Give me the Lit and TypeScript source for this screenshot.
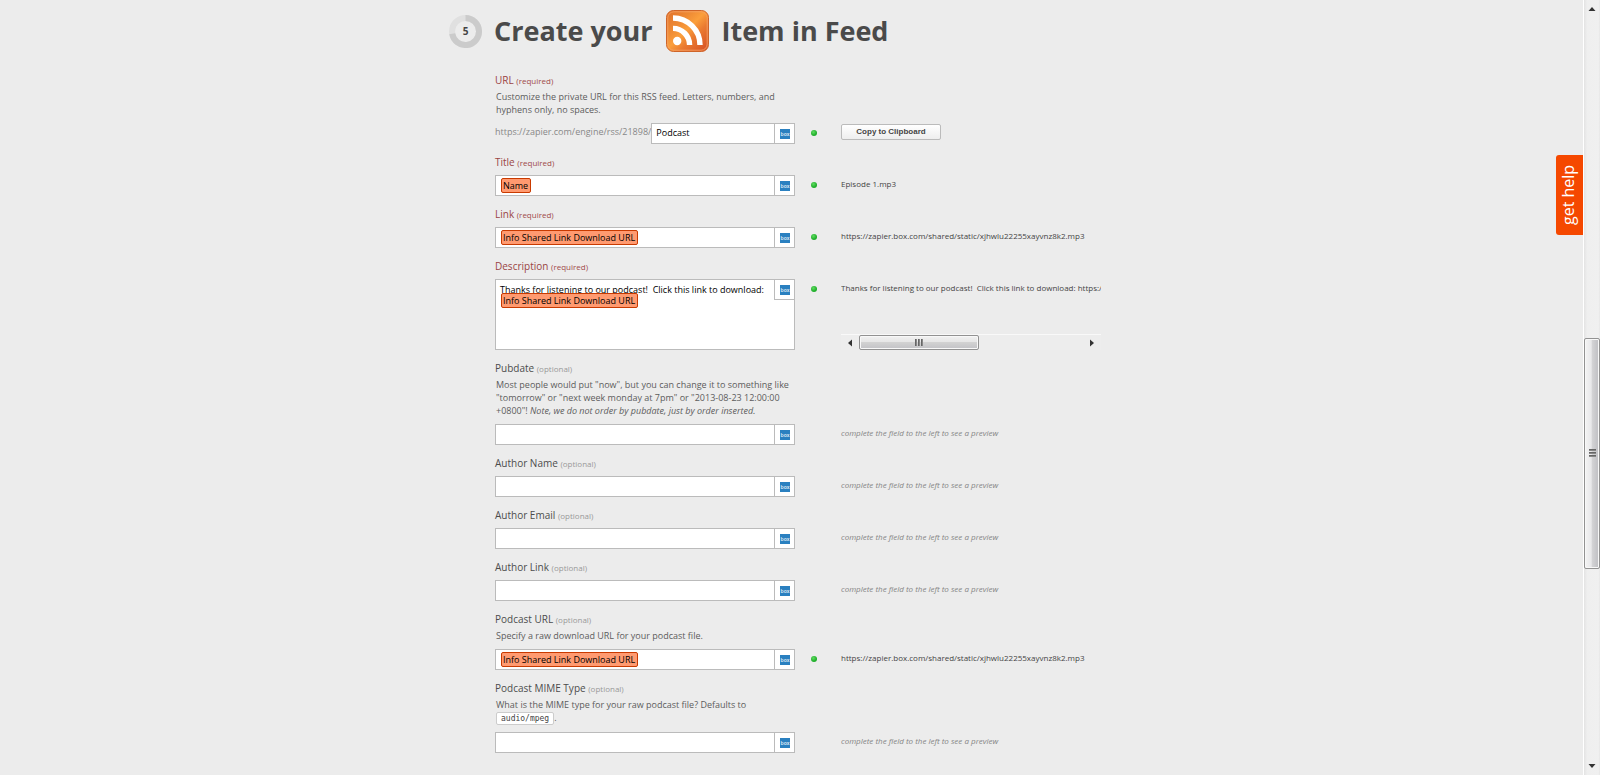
import { LitElement, html, css, svg, nothing } from "lit";
import { customElement, property } from "lit/decorators.js";

interface Field {
  id: string;
  label: string;
  required?: boolean;
  help?: unknown;
  prefix?: string;
  text?: string;
  chip?: string;
  multiline?: boolean;
  copy?: boolean;
  preview?: string;
}

const DOWNLOAD_CHIP = "Info Shared Link Download URL";
const FILE_URL = "https://zapier.box.com/shared/static/xjhwlu22255xayvnz8k2.mp3";

const FIELDS: Field[] = [
  {
    id: "url",
    label: "URL",
    required: true,
    help: "Customize the private URL for this RSS feed. Letters, numbers, and hyphens only, no spaces.",
    prefix: "https://zapier.com/engine/rss/21898/",
    text: "Podcast",
    copy: true,
  },
  { id: "title", label: "Title", required: true, chip: "Name", preview: "Episode 1.mp3" },
  { id: "link", label: "Link", required: true, chip: DOWNLOAD_CHIP, preview: FILE_URL },
  {
    id: "description",
    label: "Description",
    required: true,
    text: "Thanks for listening to our podcast!  Click this link to download:",
    chip: DOWNLOAD_CHIP,
    multiline: true,
    preview: `Thanks for listening to our podcast!  Click this link to download: ${FILE_URL}`,
  },
  {
    id: "pubdate",
    label: "Pubdate",
    help: html`Most people would put "now", but you can change it to something like "tomorrow" or "next week monday at 7pm" or "2013-08-23 12:00:00 +0800"! <em>Note, we do not order by pubdate, just by order inserted.</em>`,
  },
  { id: "author-name", label: "Author Name" },
  { id: "author-email", label: "Author Email" },
  { id: "author-link", label: "Author Link" },
  {
    id: "podcast-url",
    label: "Podcast URL",
    help: "Specify a raw download URL for your podcast file.",
    chip: DOWNLOAD_CHIP,
    preview: FILE_URL,
  },
  {
    id: "mime",
    label: "Podcast MIME Type",
    help: html`What is the MIME type for your raw podcast file? Defaults to <code>audio/mpeg</code>.`,
  },
];

const arrow = (points: string) => html`
  <svg class="arrow" viewBox="0 0 8 8" width="8" height="8" aria-hidden="true">
    ${svg`<path d=${points} fill="#333"></path>`}
  </svg>
`;

@customElement("scroll-track")
export class ScrollTrack extends LitElement {
  @property({ type: Boolean, reflect: true }) vertical = false;
  @property({ type: Number }) before = 0;
  @property({ type: Number }) size = 1;
  @property({ type: Number }) after = 1;

  static styles = css`
    :host {
      display: flex;
      align-items: stretch;
      height: 16px;
      background: #ededed;
      border-top: 1px solid #f9f9f9;
      box-sizing: border-box;
    }
    :host([vertical]) {
      flex-direction: column;
      width: 17px;
      height: 100%;
      background: linear-gradient(90deg, #e3e3e3, #efefef 20%, #f0f0f0 90%, #e6e6e6);
      border-top: 0;
      border-left: 1px solid #fff;
    }
    .end {
      flex: none;
      width: 18px;
      display: grid;
      place-items: center;
    }
    :host([vertical]) .end {
      width: auto;
      height: 17px;
    }
    .arrow {
      display: block;
    }
    .space,
    .thumb {
      flex-basis: 0;
    }
    .thumb {
      display: flex;
      gap: 1px;
      align-items: center;
      justify-content: center;
      box-sizing: border-box;
      border: 1px solid #929292;
      border-radius: 2px;
      box-shadow: inset 0 0 0 1px #f8f8f8;
      background: linear-gradient(#f2f2f2, #e6e6e6 45%, #d2d2d2 50%, #c2c2c6);
    }
    :host([vertical]) .thumb {
      flex-direction: column;
      background: linear-gradient(90deg, #f4f4f4, #e8e8ea 45%, #d4d4d6 50%, #bebec2);
    }
    .grip {
      width: 2px;
      height: 7px;
      background: linear-gradient(90deg, #555, #999);
    }
    :host([vertical]) .grip {
      width: 7px;
      height: 2px;
      background: linear-gradient(#555, #999);
    }
  `;

  render() {
    return html`
      <div class="end">${arrow(this.vertical ? "M0.5 6 L4 2 L7.5 6Z" : "M6 0.5 L2 4 L6 7.5Z")}</div>
      <div class="space" style="flex-grow:${this.before}"></div>
      <div class="thumb" style="flex-grow:${this.size}">
        <span class="grip"></span><span class="grip"></span><span class="grip"></span>
      </div>
      <div class="space" style="flex-grow:${this.after}"></div>
      <div class="end">${arrow(this.vertical ? "M0.5 2 L4 6 L7.5 2Z" : "M2 0.5 L6 4 L2 7.5Z")}</div>
    `;
  }
}

@customElement("feed-field")
export class FeedField extends LitElement {
  @property({ attribute: false }) field!: Field;

  static styles = css`
    :host {
      display: block;
      font-family: "Open Sans", sans-serif;
      font-size: 9px;
      color: #555;
    }
    .label {
      display: block;
      font-size: 10px;
      font-weight: 500;
      line-height: 16px;
      margin-bottom: 5px;
      color: #4c4c4c;
    }
    .label.helped {
      margin-bottom: 2px;
    }
    .label.required {
      color: #9a4444;
    }
    .note {
      font-size: 8px;
      font-weight: 400;
      line-height: 12px;
      color: #999;
    }
    .required .note {
      color: #a04a4a;
    }
    .help {
      width: 300px;
      box-sizing: border-box;
      margin: 0 0 7px;
      padding: 0 1px;
      line-height: 13px;
      color: #5c5c5c;
    }
    code {
      display: inline-block;
      font: 8px/11px "DejaVu Sans Mono", monospace;
      padding: 0 4px;
      color: #444;
      background: #fff;
      border: 1px solid #ccc;
      border-radius: 2px;
    }
    .line {
      display: grid;
      grid-template-columns: 300px 14px 32px 260px;
    }
    .control {
      display: flex;
    }
    .prefix {
      line-height: 18px;
      color: #888;
      white-space: nowrap;
    }
    .box {
      flex: 1;
      min-width: 0;
      display: flex;
      align-items: flex-start;
      position: relative;
      box-sizing: border-box;
      height: 21px;
      border: 1px solid #bbb;
      background: #fff;
    }
    .box.multiline {
      height: 71px;
    }
    input,
    textarea {
      flex: 1;
      min-width: 0;
      box-sizing: border-box;
      height: 100%;
      margin: 0;
      padding: 0 4px 2px;
      border: 0;
      outline: 0;
      background: none;
      resize: none;
      overflow: hidden;
      font: 9px/13px "Open Sans", sans-serif;
      color: #000;
    }
    textarea {
      padding: 3px 4px;
      white-space: pre-wrap;
    }
    .chip {
      flex: none;
      box-sizing: border-box;
      height: 15px;
      margin: 2px 0 0 5px;
      padding: 0 2px 0 1px;
      line-height: 13px;
      color: #000;
      background: #ff9a70;
      border: 1px solid #c93a00;
      border-radius: 2px;
    }
    .multiline .chip {
      position: absolute;
      top: 13px;
      left: 5px;
      margin: 0;
    }
    .picker {
      flex: none;
      display: grid;
      place-items: center;
      box-sizing: border-box;
      width: 20px;
      height: 19px;
      margin: 0;
      padding: 0;
      border: 0;
      border-left: 1px solid #bbb;
      background: #fff;
    }
    .multiline .picker {
      height: 20px;
      border-bottom: 1px solid #bbb;
    }
    .dot {
      grid-column: 3;
      width: 6px;
      height: 6px;
      margin: 7px 0 0 2px;
      border-radius: 50%;
      background: radial-gradient(circle at 40% 35%, #5fdc60, #1fae2b 60%);
    }
    .preview {
      grid-column: 4;
      display: flex;
      flex-direction: column;
      justify-content: space-between;
      min-width: 0;
      font-size: 8px;
      line-height: 18px;
      color: #444;
    }
    .text {
      white-space: pre;
      overflow: hidden;
    }
    .empty {
      font-style: italic;
      color: #858585;
    }
    .copy {
      width: 100px;
      height: 16px;
      margin-top: 1px;
      padding: 0;
      font: 700 8px/12px "Liberation Sans", Arial, sans-serif;
      color: #444;
      border: 1px solid #bbb;
      border-radius: 2px;
      background: linear-gradient(#fff, #eee);
    }
  `;

  private control(f: Field) {
    if (f.multiline) {
      return html`<textarea id=${f.id} .value=${f.text ?? ""}></textarea>`;
    }
    return html`<input id=${f.id} type="text" .value=${f.text ?? ""} />`;
  }

  private preview(f: Field) {
    if (f.copy) return html`<button class="copy" type="button">Copy to Clipboard</button>`;
    if (!f.preview) return html`<span class="text empty">complete the field to the left to see a preview</span>`;
    return html`
      <span class="text">${f.preview}</span>
      ${f.multiline ? html`<scroll-track .before=${0} .size=${119} .after=${105}></scroll-track>` : nothing}
    `;
  }

  render() {
    const f = this.field;
    return html`
      <label class="label ${f.required ? "required" : ""} ${f.help ? "helped" : ""}" for=${f.id}
        >${f.label} <span class="note">(${f.required ? "required" : "optional"})</span></label
      >
      ${f.help ? html`<p class="help">${f.help}</p>` : nothing}
      <div class="line">
        <div class="control">
          ${f.prefix ? html`<span class="prefix">${f.prefix}</span>` : nothing}
          <div class="box ${f.multiline ? "multiline" : ""}">
            ${f.chip ? html`<span class="chip">${f.chip}</span>` : nothing} ${this.control(f)}
            <button class="picker" type="button" aria-label="Insert a Box field">
              <svg width="10" height="10" viewBox="0 0 10 10" aria-hidden="true">
                <rect width="10" height="10" fill="#2a80c0"></rect>
                <text x="5" y="7" text-anchor="middle" font-family="Open Sans" font-size="5" font-weight="600" fill="#e4f0f8">box</text>
              </svg>
            </button>
          </div>
        </div>
        ${f.copy || f.preview ? html`<span class="dot"></span>` : nothing}
        <div class="preview">${this.preview(f)}</div>
      </div>
    `;
  }
}

@customElement("app-root")
export class AppRoot extends LitElement {
  static styles = css`
    :host {
      display: grid;
      grid-template-columns: minmax(0, 1fr) 17px;
      height: 100vh;
      overflow: hidden;
      position: relative;
      background: #ececec;
      font-family: "Open Sans", sans-serif;
    }
    main {
      box-sizing: border-box;
      width: 100%;
      max-width: 685px;
      margin: 0 auto;
      padding-top: 10px;
    }
    header {
      display: flex;
      align-items: center;
      height: 42px;
      gap: 12px;
    }
    h2 {
      display: flex;
      align-items: center;
      gap: 13px;
      margin: 0;
      font-size: 27px;
      font-weight: 700;
      line-height: 42px;
      white-space: nowrap;
      color: #4a4a4a;
    }
    .icon,
    .ring {
      display: block;
      flex: none;
    }
    form {
      display: flex;
      flex-direction: column;
      gap: 10px;
      margin: 20px 0 0 46px;
    }
    .help-tab {
      position: absolute;
      right: 17px;
      top: 155px;
      width: 27px;
      height: 80px;
      padding: 0 2px 0 0;
      border: 0;
      border-radius: 3px 0 0 3px;
      background: #f54800;
      color: #fff;
      font: 16px/25px "Open Sans", sans-serif;
      writing-mode: vertical-rl;
    }
    .turned {
      display: block;
      transform: rotate(180deg);
    }
  `;

  render() {
    return html`
      <main>
        <header>
          <svg class="ring" width="33" height="33" viewBox="0 0 33 33" aria-label="Step 5">
            <circle cx="16.5" cy="16.5" r="13.5" fill="none" stroke="#e0e0e0" stroke-width="6"></circle>
            <path d="M16.5 3 A13.5 13.5 0 1 1 3.2 18.8" fill="none" stroke="#cbcbcb" stroke-width="6"></path>
            <text x="16.5" y="20" text-anchor="middle" font-family="Open Sans" font-size="10" font-weight="700" fill="#444">5</text>
          </svg>
          <h2>
            <span>Create your</span>
            <svg class="icon" width="43" height="42" viewBox="0 0 43 42" aria-hidden="true">
              <defs>
                <linearGradient id="rss" x1="0" y1="0" x2="1" y2="1">
                  <stop offset="0" stop-color="#e0702a"></stop>
                  <stop offset="0.3" stop-color="#ee8a34"></stop>
                  <stop offset="0.48" stop-color="#fb9f3c"></stop>
                  <stop offset="0.65" stop-color="#ea7a30"></stop>
                  <stop offset="1" stop-color="#d54c22"></stop>
                </linearGradient>
              </defs>
              <rect x="0.5" y="0.5" width="42" height="41" rx="7" fill="url(#rss)" stroke="#cf6428"></rect>
              <rect x="1.8" y="1.8" width="39.4" height="38.4" rx="6" fill="none" stroke="#f6a468" stroke-opacity="0.8"></rect>
              <g fill="none" stroke="#fff" stroke-width="5.4">
                <path d="M7 18.4 A16.6 16.6 0 0 1 23.6 35"></path>
                <path d="M7 8 A27 27 0 0 1 34 35"></path>
              </g>
              <circle cx="11.2" cy="31" r="4.2" fill="#fff"></circle>
            </svg>
            <span>Item in Feed</span>
          </h2>
        </header>
        <form>${FIELDS.map((f) => html`<feed-field .field=${f}></feed-field>`)}</form>
      </main>
      <scroll-track vertical .before=${322} .size=${229} .after=${190}></scroll-track>
      <button class="help-tab" type="button"><span class="turned">get help</span></button>
    `;
  }
}
